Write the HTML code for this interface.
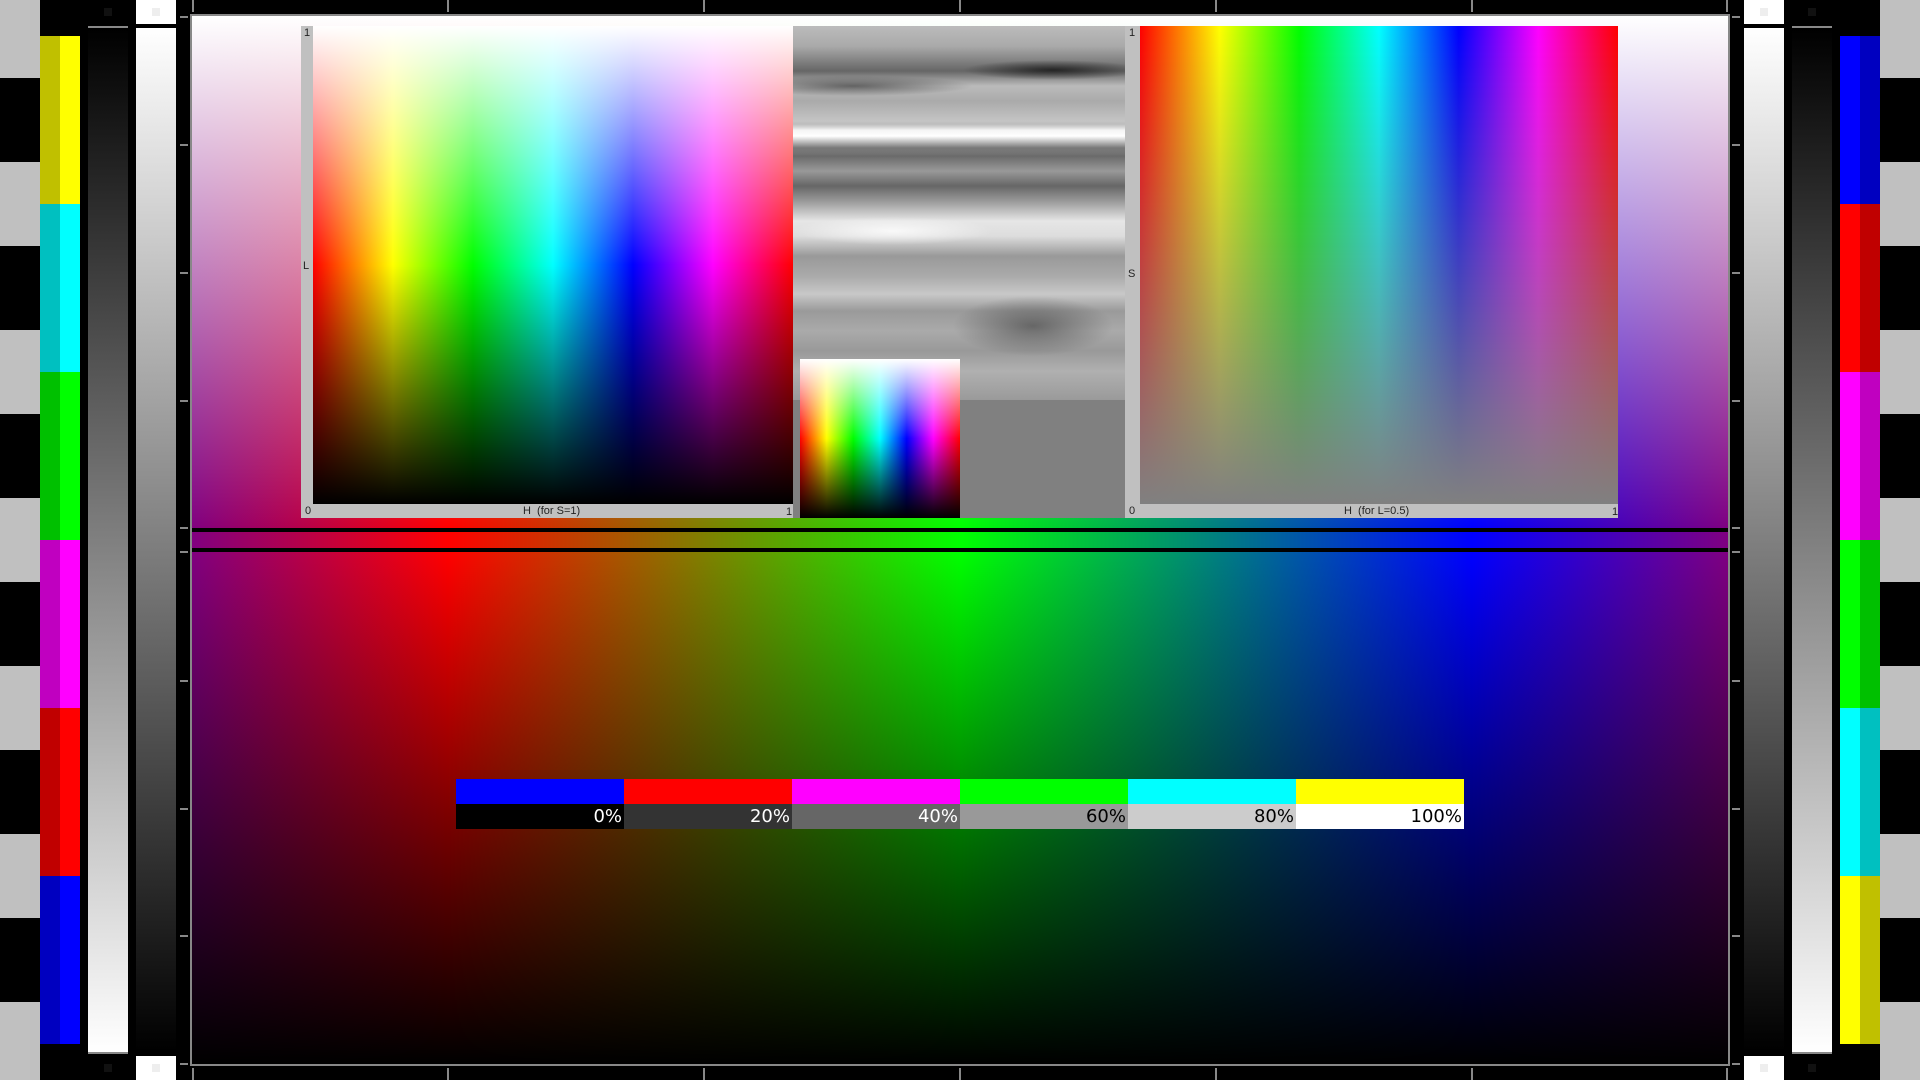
<!DOCTYPE html>
<html><head><meta charset="utf-8"><style>
*{margin:0;padding:0;box-sizing:border-box}
body{width:1920px;height:1080px;background:#000;position:relative;overflow:hidden;font-family:"Liberation Sans","DejaVu Sans",sans-serif}
div{position:absolute}
.hue{background:linear-gradient(90deg,#800080 0px,#ff0000 256px,#00ff00 768px,#0000ff 1280px,#800080 1538px)}
.rb{background:linear-gradient(90deg,#f00 0%,#ff0 16.67%,#0f0 33.33%,#0ff 50%,#00f 66.67%,#f0f 83.33%,#f00 100%)}
.lbl{font-size:11px;color:#222;line-height:12px}
.tk{background:#888}
</style></head><body>
<div style="left:0;top:0;width:40px;height:78px;background:#c0c0c0"></div>
<div style="left:0;top:78px;width:40px;height:1002px;background:repeating-linear-gradient(180deg,#000 0 84px,#c0c0c0 84px 168px)"></div>
<div style="left:40px;top:36px;width:20px;height:1008px;background:linear-gradient(180deg,#c0c000 0 168px,#00c0c0 168px 336px,#00c000 336px 504px,#c000c0 504px 672px,#c00000 672px 840px,#0000c0 840px 1008px)"></div>
<div style="left:60px;top:36px;width:20px;height:1008px;background:linear-gradient(180deg,#ff0 0 168px,#0ff 168px 336px,#0f0 336px 504px,#f0f 504px 672px,#f00 672px 840px,#00f 840px 1008px)"></div>
<div style="left:104px;top:8px;width:8px;height:8px;background:#111"></div>
<div style="left:88px;top:26px;width:40px;height:2px;background:#888"></div>
<div style="left:88px;top:28px;width:40px;height:1024px;background:linear-gradient(180deg,#000,#fff)"></div>
<div style="left:136px;top:0;width:40px;height:24px;background:#fff"></div>
<div style="left:152px;top:8px;width:8px;height:8px;background:#eee"></div>
<div style="left:136px;top:28px;width:40px;height:1024px;background:linear-gradient(180deg,#fff,#000)"></div>
<div style="left:136px;top:1056px;width:40px;height:24px;background:#fff"></div>
<div style="left:152px;top:1064px;width:8px;height:8px;background:#eee"></div>
<div style="left:104px;top:1064px;width:8px;height:8px;background:#111"></div>
<div style="left:1744px;top:0;width:40px;height:24px;background:#fff"></div>
<div style="left:1760px;top:8px;width:8px;height:8px;background:#eee"></div>
<div style="left:1744px;top:28px;width:40px;height:1024px;background:linear-gradient(180deg,#fff,#000)"></div>
<div style="left:1744px;top:1056px;width:40px;height:24px;background:#fff"></div>
<div style="left:1760px;top:1064px;width:8px;height:8px;background:#eee"></div>
<div style="left:1808px;top:8px;width:8px;height:8px;background:#111"></div>
<div style="left:1792px;top:26px;width:40px;height:2px;background:#888"></div>
<div style="left:1792px;top:28px;width:40px;height:1024px;background:linear-gradient(180deg,#000,#fff)"></div>
<div style="left:1792px;top:1052px;width:40px;height:2px;background:#888"></div>
<div style="left:1808px;top:1064px;width:8px;height:8px;background:#111"></div>
<div style="left:88px;top:1052px;width:40px;height:2px;background:#888"></div>
<div style="left:1840px;top:36px;width:20px;height:1008px;background:linear-gradient(180deg,#00f 0 168px,#f00 168px 336px,#f0f 336px 504px,#0f0 504px 672px,#0ff 672px 840px,#ff0 840px 1008px)"></div>
<div style="left:1860px;top:36px;width:20px;height:1008px;background:linear-gradient(180deg,#0000c0 0 168px,#c00000 168px 336px,#c000c0 336px 504px,#00c000 504px 672px,#00c0c0 672px 840px,#c0c000 840px 1008px)"></div>
<div style="left:1880px;top:0;width:40px;height:78px;background:#c0c0c0"></div>
<div style="left:1880px;top:78px;width:40px;height:1002px;background:repeating-linear-gradient(180deg,#000 0 84px,#c0c0c0 84px 168px)"></div>

<div style="left:190px;top:14px;width:1540px;height:1052px;background:#888"></div>
<div class="hue" style="left:192px;top:16px;width:1536px;height:512px;"></div>
<div style="left:192px;top:16px;width:1536px;height:512px;background:linear-gradient(180deg,#fff,rgba(255,255,255,0))"></div>
<div style="left:192px;top:528px;width:1536px;height:24px;background:#000"></div>
<div class="hue" style="left:192px;top:532px;width:1536px;height:16px"></div>
<div class="hue" style="left:192px;top:552px;width:1536px;height:512px"></div>
<div style="left:192px;top:552px;width:1536px;height:512px;background:linear-gradient(180deg,rgba(0,0,0,0),#000)"></div>
<div class="tk" style="left:180px;top:16px;width:8px;height:2px"></div>
<div class="tk" style="left:180px;top:144px;width:8px;height:2px"></div>
<div class="tk" style="left:180px;top:272px;width:8px;height:2px"></div>
<div class="tk" style="left:180px;top:400px;width:8px;height:2px"></div>
<div class="tk" style="left:180px;top:527px;width:8px;height:2px"></div>
<div class="tk" style="left:180px;top:551px;width:8px;height:2px"></div>
<div class="tk" style="left:180px;top:680px;width:8px;height:2px"></div>
<div class="tk" style="left:180px;top:808px;width:8px;height:2px"></div>
<div class="tk" style="left:180px;top:935px;width:8px;height:2px"></div>
<div class="tk" style="left:180px;top:1063px;width:8px;height:2px"></div>
<div class="tk" style="left:1732px;top:16px;width:8px;height:2px"></div>
<div class="tk" style="left:1732px;top:144px;width:8px;height:2px"></div>
<div class="tk" style="left:1732px;top:272px;width:8px;height:2px"></div>
<div class="tk" style="left:1732px;top:400px;width:8px;height:2px"></div>
<div class="tk" style="left:1732px;top:527px;width:8px;height:2px"></div>
<div class="tk" style="left:1732px;top:551px;width:8px;height:2px"></div>
<div class="tk" style="left:1732px;top:680px;width:8px;height:2px"></div>
<div class="tk" style="left:1732px;top:808px;width:8px;height:2px"></div>
<div class="tk" style="left:1732px;top:935px;width:8px;height:2px"></div>
<div class="tk" style="left:1732px;top:1063px;width:8px;height:2px"></div>
<div class="tk" style="left:192px;top:0;width:2px;height:12px"></div>
<div class="tk" style="left:447px;top:0;width:2px;height:12px"></div>
<div class="tk" style="left:703px;top:0;width:2px;height:12px"></div>
<div class="tk" style="left:959px;top:0;width:2px;height:12px"></div>
<div class="tk" style="left:1215px;top:0;width:2px;height:12px"></div>
<div class="tk" style="left:1471px;top:0;width:2px;height:12px"></div>
<div class="tk" style="left:1726px;top:0;width:2px;height:12px"></div>
<div class="tk" style="left:192px;top:1068px;width:2px;height:12px"></div>
<div class="tk" style="left:447px;top:1068px;width:2px;height:12px"></div>
<div class="tk" style="left:703px;top:1068px;width:2px;height:12px"></div>
<div class="tk" style="left:959px;top:1068px;width:2px;height:12px"></div>
<div class="tk" style="left:1215px;top:1068px;width:2px;height:12px"></div>
<div class="tk" style="left:1471px;top:1068px;width:2px;height:12px"></div>
<div class="tk" style="left:1726px;top:1068px;width:2px;height:12px"></div>

<div style="left:301px;top:26px;width:492px;height:492px;background:#c0c0c0"></div>
<div class="rb" style="left:313px;top:26px;width:480px;height:478px"></div>
<div style="left:313px;top:26px;width:480px;height:478px;background:linear-gradient(180deg,#fff 0%,rgba(255,255,255,0) 50%,rgba(0,0,0,0) 50%,#000 100%)"></div>
<div class="lbl" style="left:304px;top:27px">1</div>
<div class="lbl" style="left:303px;top:260px">L</div>
<div class="lbl" style="left:305px;top:505px">0</div>
<div class="lbl" style="left:523px;top:505px">H&nbsp; (for S=1)</div>
<div class="lbl" style="left:786px;top:506px">1</div>

<div style="left:793px;top:26px;width:332px;height:492px;background:#808080"></div>
<div style="left:793px;top:26px;width:332px;height:374px;background:
radial-gradient(ellipse 90px 10px at 260px 44px,rgba(20,20,20,.8),rgba(0,0,0,0)),
radial-gradient(ellipse 120px 10px at 60px 60px,rgba(40,40,40,.6),rgba(0,0,0,0)),
radial-gradient(ellipse 100px 14px at 100px 205px,rgba(255,255,255,.8),rgba(255,255,255,0)),
radial-gradient(ellipse 80px 30px at 240px 300px,rgba(60,60,60,.6),rgba(0,0,0,0)),
linear-gradient(180deg,rgba(0,0,0,0) 0,rgba(0,0,0,0) 98px,#f4f4f4 104px,#fff 110px,#777 122px,rgba(0,0,0,0) 130px),
linear-gradient(180deg,#bbb 0,#aaa 20px,#666 45px,#bbb 60px,#aaa 75px,#c4c4c4 95px,#6a6a6a 130px,#999 145px,#666 160px,#999 175px,#e6e6e6 195px,#ddd 210px,#999 230px,#aaa 250px,#c8c8c8 268px,#9a9a9a 285px,#aaa 305px,#999 325px,#b0b0b0 345px,#9a9a9a 374px)"></div>
<div style="left:800px;top:359px;width:160px;height:159px" class="rb"></div>
<div style="left:800px;top:359px;width:160px;height:159px;background:linear-gradient(180deg,#fff 0%,rgba(255,255,255,0) 50%,rgba(0,0,0,0) 50%,#000 100%)"></div>

<div style="left:1125px;top:26px;width:493px;height:492px;background:#c0c0c0"></div>
<div class="rb" style="left:1140px;top:26px;width:478px;height:478px"></div>
<div style="left:1140px;top:26px;width:478px;height:478px;background:linear-gradient(180deg,rgba(128,128,128,0),#808080)"></div>
<div class="lbl" style="left:1129px;top:27px">1</div>
<div class="lbl" style="left:1128px;top:268px">S</div>
<div class="lbl" style="left:1129px;top:505px">0</div>
<div class="lbl" style="left:1344px;top:505px">H&nbsp; (for L=0.5)</div>
<div class="lbl" style="left:1612px;top:506px">1</div>

<div style="left:456px;top:779px;width:1008px;height:25px;background:linear-gradient(90deg,#00f 0 168px,#f00 168px 336px,#f0f 336px 504px,#0f0 504px 672px,#0ff 672px 840px,#ff0 840px 1008px)"></div>
<div style="left:456px;top:804px;width:1008px;height:25px;background:linear-gradient(90deg,#000 0 168px,#333 168px 336px,#666 336px 504px,#999 504px 672px,#ccc 672px 840px,#fff 840px 1008px)"></div>
<div style="left:456px;top:804px;width:1008px;height:25px;font-family:'DejaVu Sans',sans-serif;font-size:18px;line-height:25px">
<div style="left:0;width:166px;text-align:right;color:#fff">0%</div>
<div style="left:168px;width:166px;text-align:right;color:#fff">20%</div>
<div style="left:336px;width:166px;text-align:right;color:#fff">40%</div>
<div style="left:504px;width:166px;text-align:right;color:#000">60%</div>
<div style="left:672px;width:166px;text-align:right;color:#000">80%</div>
<div style="left:840px;width:166px;text-align:right;color:#000">100%</div>
</div>
</body></html>
